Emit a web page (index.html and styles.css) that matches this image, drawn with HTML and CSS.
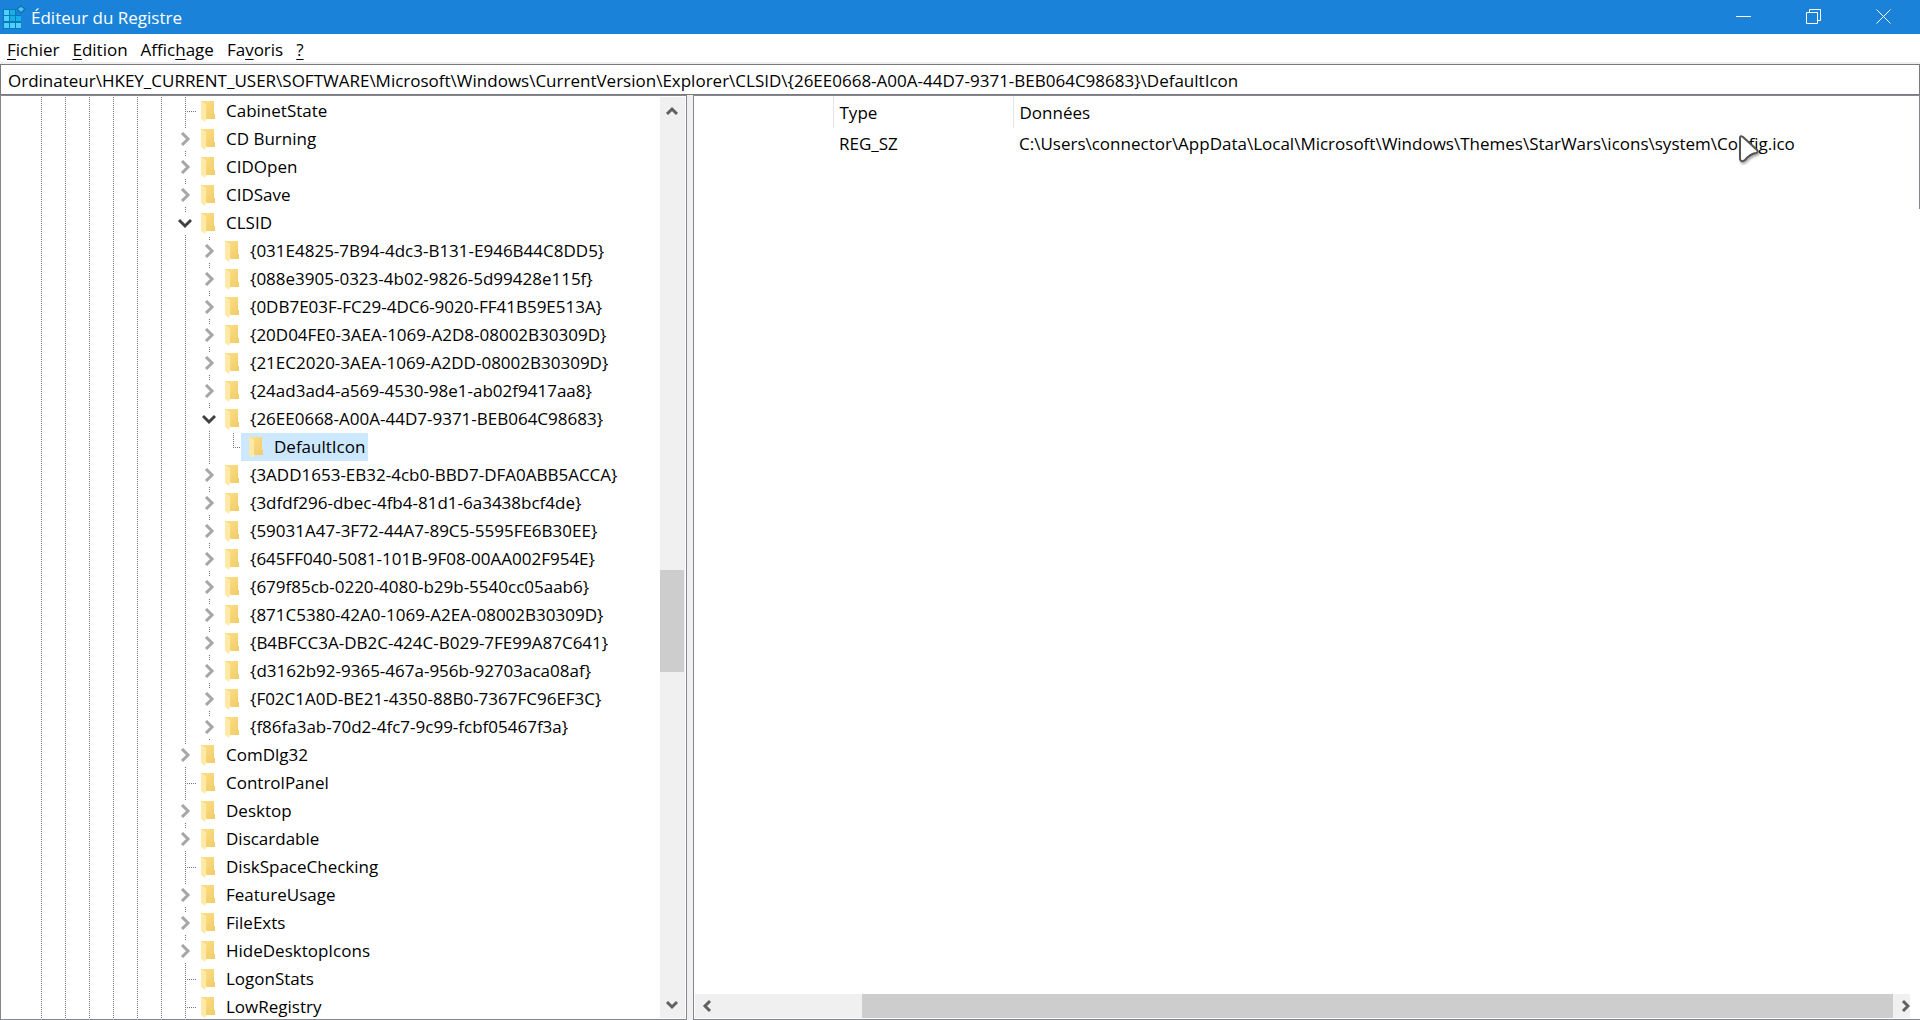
FILE: index.html
```
<!DOCTYPE html>
<html lang="fr">
<head>
<meta charset="utf-8">
<title>Éditeur du Registre</title>
<link rel="stylesheet" href="styles.css">
</head>
<body>
<svg class="defs" width="0" height="0" aria-hidden="true">
  <defs>
    <linearGradient id="gold" x1="0" y1="0" x2="1" y2="1"><stop offset="0" stop-color="#ffe08a"/><stop offset="1" stop-color="#f0cc66"/></linearGradient>
    <symbol id="folder" viewBox="0 0 16 22"><path d="M1 1h13v13h1v5H1z" fill="url(#gold)"/><path d="M1 1l5 3v15l-1 3-4-3z" fill="#ffe9a8"/></symbol>
    <symbol id="closed" viewBox="0 0 14 14"><path d="M4 1l6 6-6 6" fill="none" stroke="#a6a6a6" stroke-width="3"/></symbol>
    <symbol id="open" viewBox="0 0 14 14"><path d="M1 4l6 6 6-6" fill="none" stroke="#404040" stroke-width="3"/></symbol>
  </defs>
</svg>
<div class="window">
  <header class="titlebar">
    <svg class="app-icon" viewBox="0 0 24 24" aria-hidden="true">
      <path d="M1 4h18v20H1z" fill="#0b78b8"/>
      <path d="M2 5h5v5H2zM2 11h5v5H2zM2 18h5v5H2zM8 18h5v5H8zM14 18h5v5h-5z" fill="#4fd0ff"/>
      <path d="M8 5h5v5H8zM8 11h5v5H8zM14 11h5v5h-5z" fill="#14b0e6"/>
      <path d="M14 3h10v7H14z" fill="#1a83d9"/>
      <path d="M19 0l5 4-5 5-5-5z" fill="#0b78b8"/><path d="M19 2l3 2-3 3-3-3z" fill="#4fc4ee"/>
    </svg>
    <h1 class="title">Éditeur du Registre</h1>
    <div class="controls">
      <button class="control" aria-label="Réduire"><svg viewBox="0 0 16 16"><path d="M0 7.500h15"/></svg></button>
      <button class="control" aria-label="Restaurer"><svg viewBox="0 0 16 16"><path d="M.5 3.500h11v11H.5zM3.500 3.500v-3h11v11h-3"/></svg></button>
      <button class="control" aria-label="Fermer"><svg viewBox="0 0 16 16"><path d="M.5.5l14 14M14.500.5l-14 14"/></svg></button>
    </div>
  </header>
  <nav class="menubar">
    <button class="menu"><u>F</u>ichier</button>
    <button class="menu"><u>E</u>dition</button>
    <button class="menu">Affic<u>h</u>age</button>
    <button class="menu">Fa<u>v</u>oris</button>
    <button class="menu"><u>?</u></button>
  </nav>
  <input class="address" type="text" aria-label="Adresse" spellcheck="false" value="Ordinateur\HKEY_CURRENT_USER\SOFTWARE\Microsoft\Windows\CurrentVersion\Explorer\CLSID\{26EE0668-A00A-44D7-9371-BEB064C98683}\DefaultIcon">
  <main class="panes">
    <section class="tree-pane">
      <ul class="tree" id="tree"></ul>
      <div class="vscroll">
        <button class="arrow" aria-label="Défiler vers le haut"><svg viewBox="0 0 14 14"><path d="M2 10l5-5 5 5"/></svg></button>
        <div class="vtrack"><div class="vthumb"></div></div>
        <button class="arrow" aria-label="Défiler vers le bas"><svg viewBox="0 0 14 14"><path d="M2 5l5 5 5-5"/></svg></button>
      </div>
    </section>
    <section class="list-pane">
      <div class="list-body">
        <table class="values">
          <colgroup><col class="col-name"><col class="col-type"><col></colgroup>
          <thead><tr><th></th><th>Type</th><th>Données</th></tr></thead>
          <tbody><tr><td></td><td>REG_SZ</td><td>C:\Users\connector\AppData\Local\Microsoft\Windows\Themes\StarWars\icons\system\Config.ico</td></tr></tbody>
        </table>
      </div>
      <div class="hscroll">
        <button class="arrow" aria-label="Défiler vers la gauche"><svg viewBox="0 0 14 14"><path d="M10 2L5 7l5 5"/></svg></button>
        <div class="htrack"><div class="hthumb"></div></div>
        <button class="arrow arrow-right" aria-label="Défiler vers la droite"><svg viewBox="0 0 14 14"><path d="M5 2l5 5-5 5"/></svg></button>
      </div>
      <div class="edge"></div>
    </section>
  </main>
  <svg class="cursor" viewBox="0 0 24 32" aria-hidden="true"><path d="M3 4q0-3 3-1l14 13q2 2-1 3-6 1-11 7-4 3-5-1z" fill="#fff" stroke="#555" stroke-width="2"/></svg>
</div>
<script src="tree.js"></script>
</body>
</html>
```
FILE: styles.css
```
* { box-sizing: border-box; }
body { margin: 0; background: #f0f0f0; color: #000; font: 17px/28px "Open Sans", "Noto Sans", sans-serif; }
button { font: inherit; color: inherit; background: none; border: 0; padding: 0; }
.defs { position: absolute; }
.window { position: relative; display: flex; flex-direction: column; height: 100vh; overflow: hidden; }
.titlebar { display: flex; align-items: center; height: 34px; flex: none; background: #1a83d9; color: #fff; }
.app-icon { width: 24px; height: 24px; margin: 0 5px 0 2px; }
.title { margin: 0; padding-top: 1px; font-size: 17px; font-weight: 400; flex: 1; }
.controls { display: flex; height: 100%; padding-right: 1px; }
.control { width: 70px; display: flex; align-items: center; justify-content: center; }
.control svg { width: 16px; height: 16px; fill: none; stroke: #fff; }
.menubar { display: flex; gap: 13px; height: 28px; padding: 2px 7px 0; flex: none; background: #fff; }
.menu { height: 28px; }
.menubar u { text-decoration-thickness: 1px; text-underline-offset: 3px; }
.address { flex: none; width: 100%; height: 31px; margin-top: 2px; padding: 1px 7px 0; border: 1px solid #7a7a7a; background: #fff; font: inherit; color: inherit; }
.panes { display: flex; flex: 1; min-height: 0; }
.tree-pane { display: flex; width: 687px; flex: none; border: 1px solid #828790; background: #fff; margin-right: 6px; }
.tree { flex: 1; margin: 0; padding: 1px 0 0; list-style: none; overflow: hidden; }
.node { display: flex; height: 28px; white-space: nowrap; }
.cell { flex: none; width: 24px; height: 28px; display: flex; justify-content: center; align-items: center; }
.guide { background: repeating-linear-gradient(#777 0 1px, transparent 1px 2px) 12px 0 / 1px 100% no-repeat; }
.leaf::after { content: ""; width: 12px; height: 1px; margin-left: 12px; background: repeating-linear-gradient(90deg, #777 0 1px, transparent 1px 2px); }
.guide.last { background-size: 1px 14px; }
.mark { width: 14px; height: 22px; padding: 4px 0; background: #fff; }
.first-gap { flex: none; width: 28px; }
.label { display: flex; align-items: center; margin-left: -4px; padding: 0 3px 0 7px; }
.label svg { width: 16px; height: 22px; margin-right: 10px; }
.selected { background: #cce8ff; }
.vscroll { display: flex; flex-direction: column; width: 25px; margin: 1px 1px 1px 0; background: #f0f0f0; }
.arrow { flex: none; width: 24px; height: 28px; display: flex; align-items: center; justify-content: center; }
.arrow svg { flex: none; width: 14px; height: 14px; fill: none; stroke: #606060; stroke-width: 3; }
.arrow-right { width: 17px; justify-content: flex-end; }
.arrow-right svg { margin-right: -2px; }
.vtrack { flex: 1; padding-top: 445px; }
.vthumb { width: 24px; height: 102px; background: #cdcdcd; }
.list-pane { display: grid; grid-template: 1fr 25px / 1fr 10px; flex: 1; min-width: 0; border: solid #828790; border-width: 1px 0 1px 1px; background: #fff; }
.list-body { overflow: hidden; grid-column: 1 / 3; grid-row: 1; }
.values { width: 100%; border-collapse: collapse; table-layout: fixed; }
.col-name { width: 139px; }
.col-type { width: 180px; }
.values th, .values td { padding: 2px 6px 0; font-weight: 400; text-align: left; white-space: nowrap; }
.values th { height: 32px; border-right: 1px solid #e5e5e5; }
.values td { height: 30px; }
.edge { grid-column: 2; grid-row: 1; justify-self: end; width: 1px; height: 113px; background: #828790; }
.hscroll { grid-row: 2; grid-column: 1; display: flex; margin: 0 0 1px 1px; background: #f0f0f0; overflow: hidden; }
.hscroll .arrow { height: 24px; }
.htrack { flex: 1; padding-left: 143px; }
.hthumb { height: 24px; background: #cdcdcd; }
.cursor { position: absolute; left: 1737px; top: 134px; width: 24px; height: 32px; filter: drop-shadow(1px 2px 1px #0005); }
```
FILE: tree.js
```
// Each entry: [depth, state, name]; state is "+" closed, "v" open, "-" no children.
const nodes = [
  [0, "-", "CabinetState"], [0, "+", "CD Burning"], [0, "+", "CIDOpen"], [0, "+", "CIDSave"], [0, "v", "CLSID"],
  [1, "+", "{031E4825-7B94-4dc3-B131-E946B44C8DD5}"], [1, "+", "{088e3905-0323-4b02-9826-5d99428e115f}"],
  [1, "+", "{0DB7E03F-FC29-4DC6-9020-FF41B59E513A}"], [1, "+", "{20D04FE0-3AEA-1069-A2D8-08002B30309D}"],
  [1, "+", "{21EC2020-3AEA-1069-A2DD-08002B30309D}"], [1, "+", "{24ad3ad4-a569-4530-98e1-ab02f9417aa8}"],
  [1, "v", "{26EE0668-A00A-44D7-9371-BEB064C98683}"], [2, "-", "DefaultIcon"],
  [1, "+", "{3ADD1653-EB32-4cb0-BBD7-DFA0ABB5ACCA}"], [1, "+", "{3dfdf296-dbec-4fb4-81d1-6a3438bcf4de}"],
  [1, "+", "{59031A47-3F72-44A7-89C5-5595FE6B30EE}"], [1, "+", "{645FF040-5081-101B-9F08-00AA002F954E}"],
  [1, "+", "{679f85cb-0220-4080-b29b-5540cc05aab6}"], [1, "+", "{871C5380-42A0-1069-A2EA-08002B30309D}"],
  [1, "+", "{B4BFCC3A-DB2C-424C-B029-7FE99A87C641}"], [1, "+", "{d3162b92-9365-467a-956b-92703aca08af}"],
  [1, "+", "{F02C1A0D-BE21-4350-88B0-7367FC96EF3C}"], [1, "+", "{f86fa3ab-70d2-4fc7-9c99-fcbf05467f3a}"],
  [0, "+", "ComDlg32"], [0, "-", "ControlPanel"], [0, "+", "Desktop"], [0, "+", "Discardable"],
  [0, "-", "DiskSpaceChecking"], [0, "+", "FeatureUsage"], [0, "+", "FileExts"], [0, "+", "HideDesktopIcons"],
  [0, "-", "LogonStats"], [0, "-", "LowRegistry"]
];
const guide = '<span class="cell guide"></span>';
document.getElementById("tree").innerHTML = nodes.map(([depth, state, name], i) => {
  const next = nodes[i + 1];
  const last = depth > 1 && next && next[0] < depth ? " last" : "";
  const mark = state === "-" ? "" : `<svg class="mark"><use href="#${state === "v" ? "open" : "closed"}"/></svg>`;
  const leaf = state === "-" ? " leaf" : "";
  const selected = name === "DefaultIcon" ? " selected" : "";
  return `<li class="node"><span class="first-gap"></span>${guide.repeat(6 + depth)}` +
    `<span class="cell guide${leaf}${last}">${mark}</span>` +
    `<span class="label${selected}"><svg><use href="#folder"/></svg>${name}</span></li>`;
}).join("");
```
